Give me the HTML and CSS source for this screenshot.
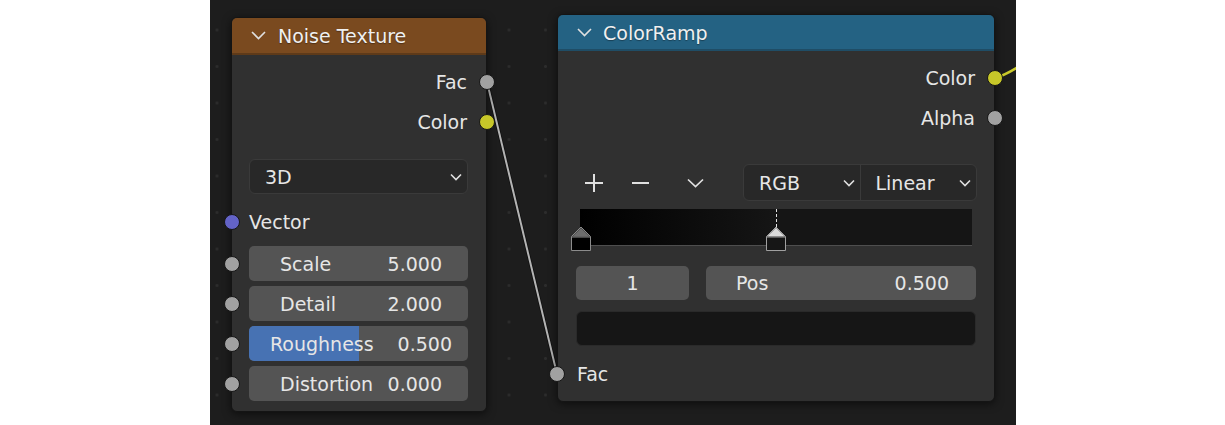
FILE: index.html
```html
<!DOCTYPE html>
<html>
<head>
  <meta charset="UTF-8">
  <title>Node Editor</title>
  <link rel="stylesheet" href="styles.css">
</head>
<body>
  <div class="editor">
    <svg class="links" width="806" height="425" viewBox="0 0 806 425">
      <path d="M277 82 L347 374" stroke="#0f0f0f" stroke-width="3.5" fill="none"/>
      <path d="M277 82 L347 374" stroke="#b4b4b4" stroke-width="2" fill="none"/>
      <path d="M785 78 C792 76 800 72 808 67" stroke="#c9c92a" stroke-width="2.5" fill="none"/>
    </svg>

    <!-- Noise Texture -->
    <div class="node noise">
      <div class="node-header">
        <svg class="collapse" width="15" height="9" viewBox="0 0 15 9"><path d="M1 1 L7.5 7.5 L14 1" stroke="#e0e0e0" stroke-width="1.6" fill="none"/></svg>
        <span class="node-title">Noise Texture</span>
      </div>
      <div class="node-body">
        <div class="row out">Fac<span class="socket right grey"></span></div>
        <div class="row out">Color<span class="socket right yellow"></span></div>
        <div class="dropdown single">
          <span>3D</span>
          <svg class="chev" width="12" height="8" viewBox="0 0 12 8"><path d="M1 1.5 L6 6.5 L11 1.5" stroke="#e0e0e0" stroke-width="1.6" fill="none"/></svg>
        </div>
        <div class="row in vector">Vector<span class="socket left purple"></span></div>
        <div class="fields">
          <div class="field slider"><span class="socket left grey"></span><span>Scale</span><span>5.000</span></div>
          <div class="field slider"><span class="socket left grey"></span><span>Detail</span><span>2.000</span></div>
          <div class="field slider tight"><span class="fill" style="width: 50%"></span><span class="socket left grey"></span><span class="txt">Roughness</span><span class="txt">0.500</span></div>
          <div class="field slider"><span class="socket left grey"></span><span>Distortion</span><span>0.000</span></div>
        </div>
      </div>
    </div>

    <!-- ColorRamp -->
    <div class="node ramp">
      <div class="node-header">
        <svg class="collapse" width="15" height="9" viewBox="0 0 15 9"><path d="M1 1 L7.5 7.5 L14 1" stroke="#e0e0e0" stroke-width="1.6" fill="none"/></svg>
        <span class="node-title">ColorRamp</span>
      </div>
      <div class="node-body">
        <div class="row out">Color<span class="socket right yellow"></span></div>
        <div class="row out">Alpha<span class="socket right grey"></span></div>
        <div class="toolbar">
          <span class="tool plus">
            <svg width="18" height="18" viewBox="0 0 18 18"><path d="M9 0 V18 M0 9 H18" stroke="#e0e0e0" stroke-width="2" fill="none"/></svg>
          </span>
          <span class="tool minus">
            <svg width="17" height="18" viewBox="0 0 17 18"><path d="M0 9 H17" stroke="#e0e0e0" stroke-width="2" fill="none"/></svg>
          </span>
          <span class="tool more">
            <svg width="17" height="10" viewBox="0 0 17 10"><path d="M1 1.5 L8.5 8.5 L16 1.5" stroke="#e0e0e0" stroke-width="1.7" fill="none"/></svg>
          </span>
          <div class="dropdown double">
            <div class="half">
              <span>RGB</span>
              <svg class="chev" width="12" height="8" viewBox="0 0 12 8"><path d="M1 1.5 L6 6.5 L11 1.5" stroke="#e0e0e0" stroke-width="1.6" fill="none"/></svg>
            </div>
            <div class="half">
              <span>Linear</span>
              <svg class="chev" width="12" height="8" viewBox="0 0 12 8"><path d="M1 1.5 L6 6.5 L11 1.5" stroke="#e0e0e0" stroke-width="1.6" fill="none"/></svg>
            </div>
          </div>
        </div>
        <div class="ramp-bar">
          <span class="stop-line"></span>
          <svg class="stop first" width="20" height="25" viewBox="0 0 20 25">
            <path d="M0.5 24.5 V10.5 L10 1 L19.5 10.5 V24.5 Z" fill="#000" stroke="#8c8c8c"/>
            <path d="M1.2 10.5 L10 1.7 L18.8 10.5 Z" fill="#6c6c6c"/>
            <path d="M0.5 11 H19.5" stroke="#8c8c8c"/>
          </svg>
          <svg class="stop active" width="20" height="25" viewBox="0 0 20 25">
            <path d="M0.5 24.5 V10.5 L10 1 L19.5 10.5 V24.5 Z" fill="#161616" stroke="#a0a0a0"/>
            <path d="M1.2 10.5 L10 1.7 L18.8 10.5 Z" fill="#dcdcdc"/>
            <path d="M0.5 11 H19.5" stroke="#a0a0a0"/>
          </svg>
        </div>
        <div class="stop-fields">
          <div class="field index">1</div>
          <div class="field slider pos"><span>Pos</span><span>0.500</span></div>
        </div>
        <div class="swatch"></div>
        <div class="row in fac">Fac<span class="socket left grey"></span></div>
      </div>
    </div>
  </div>
</body>
</html>
```

FILE: styles.css
```css
body {
  margin: 0;
  background-color: #ffffff;
  font-family: "DejaVu Sans", "Liberation Sans", sans-serif;
  font-size: 19px;
  color: #e6e6e6;
}

.editor {
  position: relative;
  margin-left: 210px;
  width: 806px;
  height: 425px;
  overflow: hidden;
  background-color: #1d1d1d;
  background-image: radial-gradient(circle, #2c2c2c 1.2px, transparent 1.7px);
  background-size: 36.5px 36.5px;
  background-position: -11.25px 11.75px;
}

.links {
  position: absolute;
  top: 0;
  left: 0;
}

.node {
  position: absolute;
  box-sizing: border-box;
  background-color: #303030;
  border: 1px solid #141414;
  border-radius: 6px;
  box-shadow: 0 2px 8px rgba(0,0,0,0.55);
}

.noise {
  left: 21px;
  top: 17px;
  width: 256px;
}

.ramp {
  left: 347px;
  top: 14px;
  width: 438px;
}

.node-header {
  display: flex;
  align-items: center;
  box-sizing: border-box;
  border-radius: 5px 5px 0 0;
  padding-left: 19px;
}

.noise .node-header {
  height: 37px;
  background-color: #7a4a1f;
  border-bottom: 2px solid #5e3a19;
}

.ramp .node-header {
  height: 36px;
  background-color: #246283;
  border-bottom: 2px solid #1f4d66;
  padding-top: 1px;
}

.collapse {
  margin-right: 12px;
}

.ramp .collapse {
  margin-right: 11px;
}

.node-title {
  color: #f0f0f0;
  text-shadow: 0 1px 1px rgba(0,0,0,0.35);
}

.node-body {
  padding: 7px 18px 10px 17px;
}

.ramp .node-body {
  padding: 7px 18px 9px 18px;
}

.row {
  position: relative;
  display: flex;
  align-items: center;
  height: 40px;
}

.row.out {
  justify-content: flex-end;
  padding-right: 1px;
}

.row.vector {
  height: 36px;
  margin-top: 10px;
}

.row.fac {
  height: 36px;
  margin-top: 10px;
  padding-left: 1px;
}

.socket {
  position: absolute;
  top: 50%;
  width: 14px;
  height: 14px;
  margin-top: -8px;
  border: 1px solid #161616;
  border-radius: 50%;
}

.socket.right {
  right: -26.5px;
}

.socket.left {
  left: -25.5px;
}

.ramp .socket.left {
  left: -27.5px;
}

.grey {
  background-color: #a1a1a1;
}

.yellow {
  background-color: #c7c729;
}

.purple {
  background-color: #6363c7;
}

.dropdown {
  box-sizing: border-box;
  background-color: #282828;
  border: 1px solid #3a3a3a;
  border-radius: 6px;
}

.dropdown.single {
  display: flex;
  align-items: center;
  justify-content: space-between;
  height: 35px;
  margin-top: 17px;
  padding: 0 5px 0 15px;
}

.fields {
  display: flex;
  flex-direction: column;
  gap: 5px;
  margin-top: 6px;
}

.field {
  position: relative;
  box-sizing: border-box;
  height: 35px;
  background-color: #545454;
  border-radius: 5px;
}

.field.slider {
  display: flex;
  align-items: center;
  justify-content: space-between;
  padding: 0 26px 0 31px;
}

.field.slider.tight {
  padding: 0 16px 0 21px;
}

.fill {
  position: absolute;
  top: 0;
  left: 0;
  bottom: 0;
  background-color: #4772b3;
  border-radius: 5px 0 0 5px;
}

.txt {
  position: relative;
}

.toolbar {
  display: flex;
  align-items: center;
  height: 37px;
  margin-top: 26px;
}

.tool {
  display: flex;
  align-items: center;
  justify-content: center;
  width: 36px;
  height: 37px;
}

.tool.minus {
  margin-left: 10px;
}

.tool.more {
  margin-left: 19px;
}

.dropdown.double {
  display: flex;
  height: 37px;
  width: 234px;
  margin-left: auto;
  margin-right: -1px;
}

.half {
  flex: 1;
  display: flex;
  align-items: center;
  justify-content: space-between;
  padding: 0 5px 0 15px;
}

.half + .half {
  border-left: 1px solid #3a3a3a;
}

.ramp-bar {
  position: relative;
  height: 37px;
  margin: 8px 4px 0 4px;
  box-sizing: border-box;
  background: linear-gradient(to right, #000000 0%, #151515 50%, #151515 100%);
  border-bottom: 1px solid #4e4e4e;
}

.stop {
  position: absolute;
  top: 17px;
}

.stop.first {
  left: -9px;
}

.stop.active {
  left: 186px;
}

.stop-line {
  position: absolute;
  top: 0;
  left: 196px;
  height: 18px;
  border-left: 1px dashed #e0e0e0;
}

.stop-fields {
  display: flex;
  gap: 17px;
  margin-top: 20px;
}

.field.index {
  width: 113px;
  height: 34px;
  display: flex;
  align-items: center;
  justify-content: center;
}

.field.pos {
  flex: 1;
  height: 34px;
  padding: 0 27px 0 30px;
}

.swatch {
  box-sizing: border-box;
  height: 35px;
  margin-top: 11px;
  background-color: #161616;
  border: 1px solid #2a2a2a;
  border-radius: 6px;
}
```
